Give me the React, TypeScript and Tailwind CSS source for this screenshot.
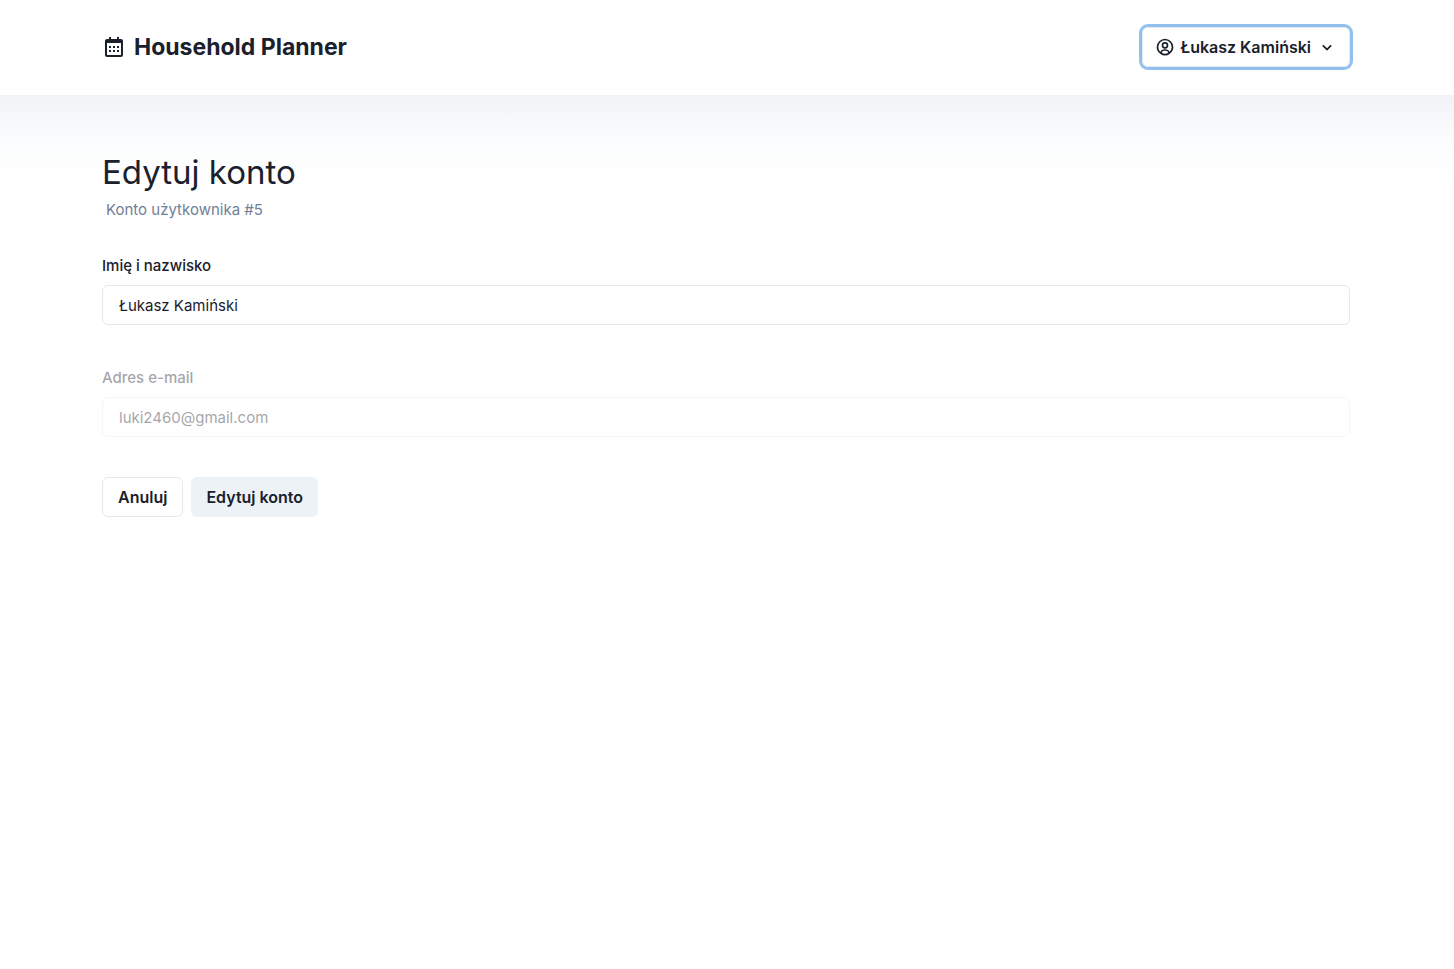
import React from "react";
import { BiCalendar, BiChevronDown, BiUserCircle } from "react-icons/bi";

function Container({ children }: { children: React.ReactNode }) {
  return <div className="mx-auto w-full max-w-[1280px] px-4">{children}</div>;
}

function Header() {
  return (
    <header className="bg-white pr-0.5">
      <Container>
        <div className="flex h-[95px] items-center justify-between pb-px">
          <a href="#" className="flex items-center gap-2 text-[23px] leading-[35px] font-bold">
            <BiCalendar size={24} aria-hidden="true" />
            <span>Household Planner</span>
          </a>
          <button
            type="button"
            aria-haspopup="menu"
            className="flex h-10 items-center gap-1.5 rounded-md border border-[#e2e8f0] px-3 text-base font-semibold ring-3 ring-[#90c1ee]"
          >
            <BiUserCircle size={20} aria-hidden="true" />
            <span>Łukasz Kamiński</span>
            <BiChevronDown size={20} aria-hidden="true" />
          </button>
        </div>
      </Container>
    </header>
  );
}

interface FieldProps {
  id: string;
  label: string;
  type: string;
  value: string;
  disabled?: boolean;
}

function Field({ id, label, type, value, disabled = false }: FieldProps) {
  return (
    <div className={disabled ? "opacity-40" : ""}>
      <label htmlFor={id} className="mb-[7px] block font-medium">
        {label}
      </label>
      <input
        id={id}
        type={type}
        defaultValue={value}
        disabled={disabled}
        className="block h-10 w-full rounded-md border border-[#e2e8f0] bg-transparent px-4 outline-none"
      />
    </div>
  );
}

export default function App() {
  return (
    <div className="min-h-screen bg-white font-['Inter','Liberation_Sans',sans-serif] text-[15px] leading-6 text-[#1a202c]">
      <Header />
      <main className="bg-linear-to-b from-[#f1f3f7] via-[#fcfdfe] via-[52px] to-white to-[100px] pt-[52px] pr-0.5 pb-10">
        <Container>
          <h1 className="text-[33px] leading-[51px]">Edytuj konto</h1>
          <p className="pl-1 text-[#718096]">Konto użytkownika #5</p>
          <form className="mt-8" onSubmit={(event) => event.preventDefault()}>
            <div className="flex flex-col gap-[41px]">
              <Field id="name" label="Imię i nazwisko" type="text" value="Łukasz Kamiński" />
              <Field id="email" label="Adres e-mail" type="email" value="luki2460@gmail.com" disabled />
            </div>
            <div className="mt-10 flex gap-2">
              <button
                type="button"
                className="h-10 rounded-md border border-[#e2e8f0] px-[15px] text-base font-semibold"
              >
                Anuluj
              </button>
              <button type="submit" className="h-10 rounded-md bg-[#edf2f7] px-[15px] text-base font-semibold">
                Edytuj konto
              </button>
            </div>
          </form>
        </Container>
      </main>
    </div>
  );
}
